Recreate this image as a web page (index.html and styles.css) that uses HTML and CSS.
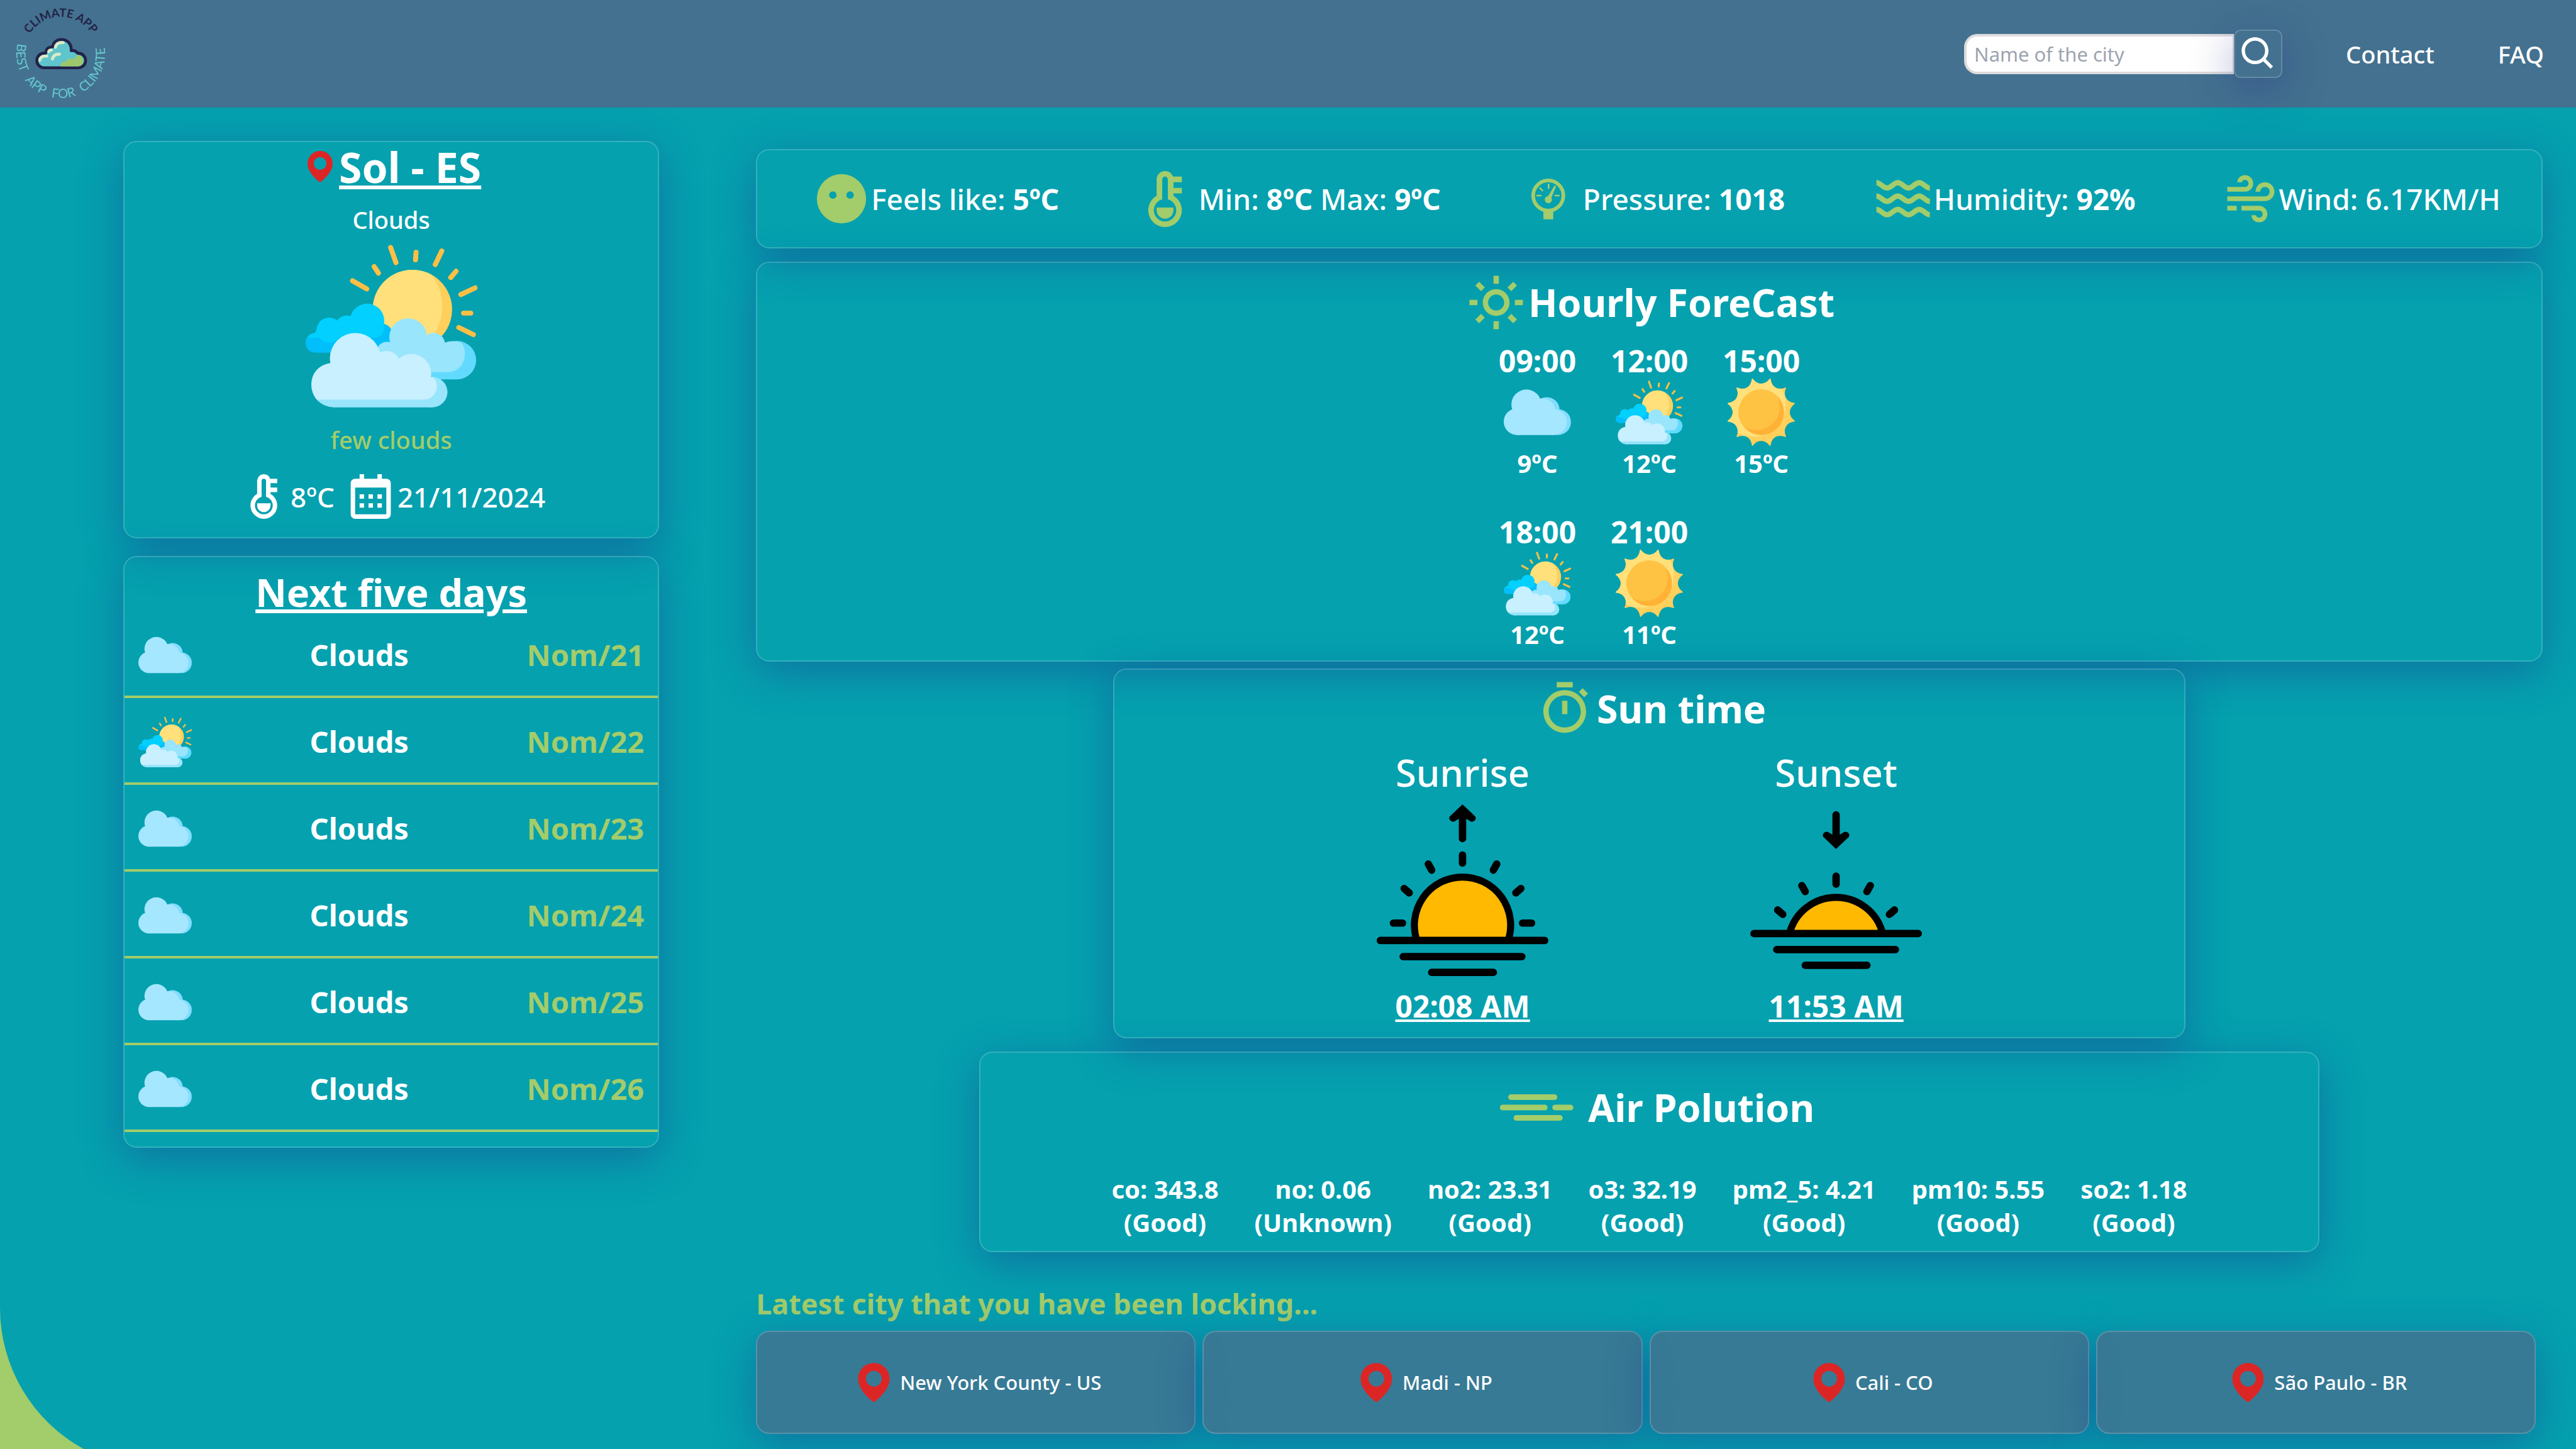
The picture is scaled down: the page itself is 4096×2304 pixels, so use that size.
FILE: index.html
```html
<!DOCTYPE html>
<html lang="en">
<head>
<meta charset="utf-8">
<title>Climate App</title>
<link rel="stylesheet" href="styles.css">
</head>
<body>
<svg class="sprite" aria-hidden="true">
  <symbol id="pin" viewBox="0 0 24 24">
    <path d="M12 2C7.589 2 4 5.589 4 9.995 3.971 16.44 11.696 21.784 12 22c0 0 8.029-5.56 8-12 0-4.411-3.589-8-8-8zm0 12c-2.21 0-4-1.79-4-4s1.79-4 4-4 4 1.79 4 4-1.79 4-4 4z"/>
  </symbol>
  <symbol id="thermometer" viewBox="0 0 24 24">
    <path fill-rule="evenodd" d="M12 2a3 3 0 0 0-3 3v5.800a6 6 0 1 0 6 0V10h3V8h-3V6h3V4h-3.170A3 3 0 0 0 12 2zM12 4a1 1 0 0 1 1 1v7.130a4 4 0 1 1-2 0V5a1 1 0 0 1 1-1z"/>
    <path d="M9 15v1a3 3 0 0 0 6 0v-1z"/>
  </symbol>
  <symbol id="cloud" viewBox="0 0 100 100">
    <g fill="#83dcff"><circle cx="64" cy="46.500" r="19"/><circle cx="80.700" cy="64.600" r="19.200"/></g>
    <g fill="#a4e7ff">
      <circle cx="19.800" cy="64" r="19.800"/><circle cx="33.700" cy="38.500" r="22.300"/>
      <circle cx="57.500" cy="49" r="19.500"/><circle cx="74.600" cy="64.600" r="19.200"/>
      <path d="M19.800 44h38v20h17v19.800h-55z"/>
    </g>
  </symbol>
  <symbol id="few-clouds" viewBox="0 0 100 100">
    <g stroke="#ffbf45" stroke-width="2.900" stroke-linecap="round">
      <path d="M49.500 4.600l3.100 8.800M64.300 7.400l-.3 4.300M79.300 6.600l-3.800 7.900M39.900 15.700l2.500 3.800M87.600 18.400l-3.100 3.700M27.300 24l8.300 4.700M98.700 28.100l-8.300 3.900M92 42.800h4.200M89.200 51.200l8.500 4.100"/>
    </g>
    <circle cx="62.200" cy="40.700" r="23.100" fill="#ffcf5c"/>
    <path d="M73.600 20.600A23.100 23.100 0 1 0 68 63a31 31 0 0 0 5.600-42.400z" fill="#ffe07a"/>
    <g fill="#01bffb"><path d="M5.500 54.400h39V49a6 6 0 0 1 6 6v10.800h-45a5.500 5.500 0 0 1-5.500-5.500v-.4a5.500 5.500 0 0 1 5.500-5.500z"/></g>
    <g fill="#02d0ff">
      <circle cx="13.700" cy="52.700" r="7.300"/><circle cx="24" cy="51" r="6.800"/><circle cx="35.800" cy="47.300" r="10"/>
      <path d="M.9 57.100a5.500 5.500 0 0 1 4.600-2.700L7 51h38.800c0 3.400-2.400 6.100-5.800 6.100z"/>
    </g>
    <g fill="#62dafd"><circle cx="88.100" cy="70.200" r="11.200"/><path d="M70 70h18v11.400H70z"/></g>
    <g fill="#98e5fc">
      <circle cx="59.700" cy="56.900" r="11"/><circle cx="74.500" cy="61" r="6.700"/><circle cx="47.500" cy="66" r="6.500"/>
      <path d="M47 60h34.200c2-1 4.600-1.300 9.500 0 4.500 6 1.500 17.200-7.800 17.200H47z"/>
    </g>
    <g fill="#98e5fc"><circle cx="73.700" cy="88.800" r="8.900"/><circle cx="16.200" cy="84.700" r="12.900"/><path d="M16.200 85h57.500v12.700H16.200z"/></g>
    <g fill="#c8f0ff">
      <circle cx="28.900" cy="69.200" r="14.800"/><circle cx="47" cy="73" r="8.200"/><circle cx="61.600" cy="78.100" r="11.500"/>
      <path d="M16.200 71.800H70v8.300h4.400c4.500 5 1.300 13.100-5.800 13.100H6.500C.7 86 2.500 72.500 16.200 71.800z"/>
    </g>
  </symbol>
  <clipPath id="lit-side"><circle cx="38" cy="38" r="48.500"/></clipPath>
  <clipPath id="disc"><circle cx="50" cy="50" r="33.800"/></clipPath>
  <symbol id="sun" viewBox="0 0 100 100">
    <path fill="#ffd05c" stroke="#ffd05c" stroke-width="1.400" stroke-linejoin="round" d="M36.800.7C44.500 10.800 55.500 10.800 63.200.7C64.800 13.300 74.400 18.800 86.100 13.900C81.200 25.600 86.700 35.200 99.300 36.800C89.200 44.500 89.200 55.500 99.300 63.200C86.700 64.800 81.200 74.400 86.100 86.100C74.400 81.200 64.800 86.700 63.200 99.300C55.500 89.200 44.500 89.200 36.800 99.300C35.200 86.700 25.600 81.200 13.900 86.100C18.800 74.400 13.300 64.800.7 63.200C10.800 55.500 10.800 44.500.7 36.800C13.300 35.200 18.800 25.600 13.900 13.900C25.600 18.800 35.200 13.300 36.800.7Z"/>
    <path clip-path="url(#lit-side)" fill="#ffe07a" stroke="#ffe07a" stroke-width="1.400" stroke-linejoin="round" d="M36.800.7C44.500 10.800 55.500 10.800 63.200.7C64.800 13.300 74.400 18.800 86.100 13.900C81.200 25.600 86.700 35.200 99.300 36.800C89.200 44.500 89.200 55.500 99.300 63.200C86.700 64.800 81.200 74.400 86.100 86.100C74.400 81.200 64.800 86.700 63.200 99.300C55.500 89.200 44.500 89.200 36.800 99.300C35.200 86.700 25.600 81.200 13.900 86.100C18.800 74.400 13.300 64.800.7 63.200C10.800 55.500 10.800 44.500.7 36.800C13.300 35.200 18.800 25.600 13.900 13.900C25.600 18.800 35.200 13.300 36.800.7Z"/>
    <circle cx="50" cy="50" r="33.800" fill="#ffb236"/>
    <circle cx="42.500" cy="41.500" r="35" fill="#ffc344" clip-path="url(#disc)"/>
  </symbol>
</svg>

<header class="topbar">
  <a class="logo" href="#" aria-label="Climate App">
    <svg viewBox="60 0 960 960">
      <defs>
        <path id="arc-top" d="M210 480A330 330 0 0 1 870 480"/>
        <path id="arc-bottom" d="M155.800 384.200A396 396 0 0 0 540 876A396 396 0 0 0 924.200 384.200"/>
      </defs>
      <text class="logo-top"><textPath href="#arc-top" startOffset="50%">CLIMATE APP</textPath></text>
      <text class="logo-bottom">
        <textPath href="#arc-bottom" startOffset="2">BEST</textPath>
        <textPath href="#arc-bottom" startOffset="348">APP</textPath>
        <textPath href="#arc-bottom" startOffset="632">FOR</textPath>
        <textPath href="#arc-bottom" startOffset="924">CLIMATE</textPath>
      </text>
      <path fill="#5fc5cd" stroke="#222349" stroke-width="52" d="M392 592a52 52 0 0 1 0-104h10q16 0 18-16c2-26 18-37 36-39q22 0 25-14c4-34 32-53 68-53c40 0 72 30 72 72v18q2 8 12 8h18q20 2 28 18q4 6 12 6h6a52 52 0 0 1 0 104z"/>
      <path fill="#5fc5cd" d="M392 592a52 52 0 0 1 0-104h10q16 0 18-16c2-26 18-37 36-39q22 0 25-14c4-34 32-53 68-53c40 0 72 30 72 72v18q2 8 12 8h18q20 2 28 18q4 6 12 6h6a52 52 0 0 1 0 104z"/>
      <path fill="#9cc76b" d="M538 592c0-30 20-46 50-42c8-24 30-34 56-24h22c4-24 18-35 31-35a51 51 0 0 1 0 101z"/>
      <path fill="none" stroke="#dcebc6" stroke-width="26" stroke-linecap="round" d="M493 422c6-28 28-46 70-42M432 462c4-10 14-17 26-15M353 539c4-26 24-42 64-38M466 527c6-26 26-46 64-43"/>
    </svg>
  </a>
  <nav class="nav">
    <form class="search">
      <input class="search-input" type="text" placeholder="Name of the city" aria-label="Name of the city">
      <button class="search-button glass" type="button" aria-label="Search">
        <svg viewBox="0 0 24 24"><path d="M10 18a7.952 7.952 0 0 0 4.897-1.688l4.396 4.396 1.414-1.414-4.396-4.396A7.952 7.952 0 0 0 18 10c0-4.411-3.589-8-8-8s-8 3.589-8 8 3.589 8 8 8zm0-14c3.309 0 6 2.691 6 6s-2.691 6-6 6-6-2.691-6-6 2.691-6 6-6z"/></svg>
      </button>
    </form>
    <a href="#">Contact</a>
    <a href="#">FAQ</a>
  </nav>
</header>

<main class="page">
  <aside class="sidebar">
    <section class="glass today">
      <h1 class="today-city"><svg class="pin"><use href="#pin"/></svg><span class="underlined">Sol - ES</span></h1>
      <p class="today-text">Clouds</p>
      <svg class="today-picture"><use href="#few-clouds"/></svg>
      <p class="today-text green">few clouds</p>
      <div class="today-facts">
        <svg><use href="#thermometer"/></svg><span>8ºC</span>
        <svg class="calendar" viewBox="0 0 24 24"><path d="M7 11h2v2H7zm0 4h2v2H7zm4-4h2v2h-2zm0 4h2v2h-2zm4-4h2v2h-2zm0 4h2v2h-2z"/><path d="M5 22h14c1.103 0 2-.897 2-2V6c0-1.103-.897-2-2-2h-2V2h-2v2H9V2H7v2H5c-1.103 0-2 .897-2 2v14c0 1.103.897 2 2 2zM19 8l.001 12H5V8h14z"/></svg><span>21/11/2024</span>
      </div>
    </section>

    <section class="glass week">
      <h2 class="underlined">Next five days</h2>
      <ul>
        <li><svg><use href="#cloud"/></svg><span>Clouds</span><span class="green">Nom/21</span></li>
        <li><svg><use href="#few-clouds"/></svg><span>Clouds</span><span class="green">Nom/22</span></li>
        <li><svg><use href="#cloud"/></svg><span>Clouds</span><span class="green">Nom/23</span></li>
        <li><svg><use href="#cloud"/></svg><span>Clouds</span><span class="green">Nom/24</span></li>
        <li><svg><use href="#cloud"/></svg><span>Clouds</span><span class="green">Nom/25</span></li>
        <li><svg><use href="#cloud"/></svg><span>Clouds</span><span class="green">Nom/26</span></li>
      </ul>
    </section>
  </aside>

  <div class="content">
    <section class="glass stats">
      <div class="stat">
        <svg class="icon-face" viewBox="0 0 24 24"><path fill-rule="evenodd" d="M12 2a10 10 0 1 0 0 20a10 10 0 0 0 0-20zM8.500 9a1.500 1.500 0 1 1 0 3a1.500 1.500 0 0 1 0-3zM15.500 9a1.500 1.500 0 1 1 0 3a1.500 1.500 0 0 1 0-3z"/></svg>
        <p>Feels like: <b>5ºC</b></p>
      </div>
      <div class="stat">
        <svg class="icon-thermometer"><use href="#thermometer"/></svg>
        <p>Min: <b>8ºC</b> Max: <b>9ºC</b></p>
      </div>
      <div class="stat">
        <svg class="icon-gauge" viewBox="90 30 480 480">
          <circle cx="258.500" cy="238.500" r="135.500" fill="none" stroke="#a3cc6a" stroke-width="33"/>
          <path d="M215 370h88v82h-88zM254 132h15v46h-15zM151 232h46v14h-46zM315 232h45v14h-45zM186 162l30 32-9 10-32-32zM315 149l14 7-41 98v20h-32v-30z"/>
          <circle cx="259" cy="275" r="32"/>
        </svg>
        <p>Pressure: <b>1018</b></p>
      </div>
      <div class="stat">
        <svg class="icon-waves" viewBox="-20 0 192 112"><g fill="none" stroke="#a3cc6a" stroke-width="16"><path d="M0 8C12 8 20 24 32 24S52 8 64 8S84 24 96 24S116 8 128 8S148 24 160 24"/><path d="M0 48C12 48 20 64 32 64S52 48 64 48S84 64 96 64S116 48 128 48S148 64 160 64"/><path d="M0 88C12 88 20 104 32 104S52 88 64 88S84 104 96 104S116 88 128 88S148 104 160 104"/></g></svg>
        <p>Humidity: <b>92%</b></p>
      </div>
      <div class="stat">
        <svg class="icon-wind" viewBox="0 0 24 24"><path d="M13 5.500C13 3.570 11.430 2 9.500 2 7.466 2 6.250 3.525 6.250 5h2c0-.415.388-1 1.250-1 .827 0 1.500.673 1.500 1.500S10.327 7 9.500 7H2v2h7.500C11.430 9 13 7.430 13 5.500zm2.500 9.500H8v2h7.500c.827 0 1.500.673 1.500 1.500s-.673 1.500-1.500 1.500c-.862 0-1.250-.585-1.250-1h-2c0 1.475 1.216 3 3.250 3 1.930 0 3.500-1.570 3.500-3.500S17.430 15 15.500 15z"/><path d="M18 5c-2.206 0-4 1.794-4 4h2c0-1.103.897-2 2-2s2 .897 2 2-.897 2-2 2H2v2h16c2.206 0 4-1.794 4-4s-1.794-4-4-4zM2 15h4v2H2z"/></svg>
        <p>Wind: 6.17KM/H</p>
      </div>
    </section>

    <section class="glass hourly">
      <h2 class="title">
        <svg class="title-icon" viewBox="0 0 24 24"><path d="M6.993 12c0 2.761 2.246 5.007 5.007 5.007s5.007-2.246 5.007-5.007S14.761 6.993 12 6.993 6.993 9.239 6.993 12zM12 8.993c1.658 0 3.007 1.349 3.007 3.007S13.658 15.007 12 15.007 8.993 13.658 8.993 12 10.342 8.993 12 8.993zM10.998 19h2v3h-2zm0-17h2v3h-2zm-9 9h3v2h-3zm17 0h3v2h-3zM4.219 18.363l2.120-2.122 1.415 1.414-2.120 2.122zM16.240 6.344l2.122-2.122 1.414 1.414-2.122 2.122zM6.342 7.759 4.220 5.637l1.415-1.414 2.120 2.122zm13.434 10.605-1.414 1.414-2.122-2.122 1.414-1.414z"/></svg>
        Hourly ForeCast
      </h2>
      <ul class="hours">
        <li><b>09:00</b><svg><use href="#cloud"/></svg><span>9ºC</span></li>
        <li><b>12:00</b><svg><use href="#few-clouds"/></svg><span>12ºC</span></li>
        <li><b>15:00</b><svg><use href="#sun"/></svg><span>15ºC</span></li>
        <li><b>18:00</b><svg><use href="#few-clouds"/></svg><span>12ºC</span></li>
        <li><b>21:00</b><svg><use href="#sun"/></svg><span>11ºC</span></li>
      </ul>
    </section>

    <section class="glass suntime">
      <h2 class="title">
        <svg class="title-icon" viewBox="0 0 24 24"><path d="M12 5c-4.411 0-8 3.589-8 8s3.589 8 8 8 8-3.589 8-8-3.589-8-8-8zm0 14c-3.309 0-6-2.691-6-6s2.691-6 6-6 6 2.691 6 6-2.691 6-6 6z"/><path d="M11 9h2v5h-2zM9 2h6v2H9zm10.293 5.707-2-2 1.414-1.414 2 2z"/></svg>
        Sun time
      </h2>
      <div class="sun-events">
        <div class="sun-event">
          <h3>Sunrise</h3>
          <svg viewBox="0 0 512 512">
            <path fill="#ffb900" stroke="#000" stroke-width="21" d="M120 406A143.500 143.500 0 1 1 392 406"/>
            <g fill="none" stroke="#000" stroke-width="22" stroke-linecap="round">
              <path d="M11 406h490M79 454h354M164 501h184M256 151v24M154 178l10 18M358 178l-10 18M82 251l15 13M430 251l-15 13M50 354h27M435 354h27M256 20v82"/>
            </g>
            <path d="M256 0l38 36c6 8-6 20-15 14l-23-14-23 14c-9 6-21-6-15-14z"/>
          </svg>
          <b class="underlined">02:08 AM</b>
        </div>
        <div class="sun-event">
          <h3>Sunset</h3>
          <svg viewBox="0 0 512 512">
            <path fill="#ffb900" stroke="#000" stroke-width="21" d="M117 385A143.500 143.500 0 0 1 395 385"/>
            <g fill="none" stroke="#000" stroke-width="22" stroke-linecap="round">
              <path d="M11 385h490M79 433h354M164 480h184M256 214v24M154 242l10 18M358 242l-10 18M82 315l15 13M430 315l-15 13M256 31v82"/>
            </g>
            <path d="M256 133l38-36c6-8-6-20-15-14l-23 14-23-14c-9-6-21 6-15 14z"/>
          </svg>
          <b class="underlined">11:53 AM</b>
        </div>
      </div>
    </section>

    <section class="glass air">
      <h2 class="title">
        <svg class="haze-icon" viewBox="-46 -57 310 192"><path fill="none" stroke="#a3cc6a" stroke-width="17" stroke-linecap="round" d="M34 8h130M9 39h126M166 39h46M50 70h130"/></svg>
        Air Polution
      </h2>
      <ul class="pollutants">
        <li>co: 343.8<br>(Good)</li>
        <li>no: 0.06<br>(Unknown)</li>
        <li>no2: 23.31<br>(Good)</li>
        <li>o3: 32.19<br>(Good)</li>
        <li>pm2_5: 4.21<br>(Good)</li>
        <li>pm10: 5.55<br>(Good)</li>
        <li>so2: 1.18<br>(Good)</li>
      </ul>
    </section>

    <section class="latest">
      <h2 class="green">Latest city that you have been locking...</h2>
      <div class="cities">
        <a class="glass city" href="#"><svg><use href="#pin"/></svg>New York County - US</a>
        <a class="glass city" href="#"><svg><use href="#pin"/></svg>Madi - NP</a>
        <a class="glass city" href="#"><svg><use href="#pin"/></svg>Cali - CO</a>
        <a class="glass city" href="#"><svg><use href="#pin"/></svg>São Paulo - BR</a>
      </div>
    </section>
  </div>
</main>
<svg class="corner" viewBox="0 0 133 225" aria-hidden="true"><path d="M0 0A256 256 0 0 0 133 225H0z"/></svg>
</body>
</html>
```
FILE: styles.css
```css
:root {
  --green: #a3cc6a;
  --teal: #05a1af;
  --steel: #44718f;
}

* {
  box-sizing: border-box;
  margin: 0;
  padding: 0;
}

body {
  position: relative;
  min-height: 100vh;
  overflow: hidden;
  background: var(--teal);
  color: #fff;
  font-family: "Noto Sans", "Open Sans", sans-serif;
  font-size: 38px;
  font-weight: 500;
}

ul {
  list-style: none;
}

a {
  color: inherit;
  text-decoration: none;
}

svg {
  display: block;
  flex: none;
  fill: currentColor;
}

.sprite {
  position: absolute;
  width: 0;
  height: 0;
}

.green {
  color: var(--green);
}

.underlined {
  text-decoration: underline;
}

.glass {
  border: 2px solid rgba(255, 255, 255, 0.18);
  border-radius: 21px;
  box-shadow: 0 17px 68px 0 rgba(31, 38, 135, 0.37);
}

/* Top bar */
.topbar {
  display: flex;
  align-items: center;
  justify-content: space-between;
  height: 171px;
  padding: 0 51px 0 11px;
  background: var(--steel);
}

.logo svg {
  width: 171px;
  height: 171px;
}

.logo-top,
.logo-bottom {
  font-family: Lato, sans-serif;
}

.logo-top {
  fill: #222349;
  font-size: 104px;
  font-weight: 700;
  text-anchor: middle;
}

.logo-bottom {
  fill: #65c8d0;
  font-size: 114px;
  font-weight: 400;
}

.nav {
  display: flex;
  align-items: center;
  gap: 101px;
}

.search {
  display: flex;
  align-items: center;
}

.search-input {
  width: 429px;
  height: 64px;
  padding: 0 12px;
  border: 4px solid #dcdcdc;
  border-right-width: 2px;
  border-radius: 21px 0 0 21px;
  background: #fff;
  color: #374151;
  font: 400 31px "Noto Sans", sans-serif;
}

.search-input::placeholder {
  color: #9ca3af;
}

.search-button {
  position: relative;
  display: grid;
  place-items: center;
  width: 77px;
  height: 77px;
  border-radius: 11px;
  background: var(--steel);
  color: #fff;
}

.search-button svg {
  width: 64px;
  height: 64px;
}

/* Page columns */
.page {
  display: grid;
  grid-template-columns: 3fr 10fr;
  align-items: start;
  gap: 154px;
  padding: 53px 53px 20px 196px;
}

.sidebar {
  display: grid;
  gap: 28px;
}

.content {
  display: flex;
  flex-direction: column;
  align-items: center;
  padding-top: 13px;
}

/* Current weather */
.today {
  display: flex;
  flex-direction: column;
  align-items: center;
  padding-bottom: 22px;
}

.today-city {
  display: flex;
  align-items: center;
  font-size: 66px;
  line-height: 78px;
}

.pin {
  width: 60px;
  height: 60px;
  color: #dc2626;
}

.today-text {
  margin-top: 15px;
  line-height: 60px;
}

.today-picture {
  width: 273px;
  height: 273px;
  margin-top: 2px;
}

.today-facts {
  display: flex;
  align-items: center;
  margin-top: 18px;
  font-size: 44px;
}

.today-facts svg {
  width: 85px;
  height: 85px;
}

.today-facts .calendar {
  margin-left: 15px;
}

/* Next days */
.week {
  padding: 25px 0 23px;
  text-align: center;
}

.week h2 {
  font-size: 61px;
  line-height: 61px;
}

.week li {
  display: flex;
  align-items: center;
  justify-content: space-between;
  height: 138px;
  padding: 4px 22px 0;
  border-bottom: 4px solid var(--green);
  font-size: 47px;
  font-weight: 700;
}

.week li svg {
  width: 85px;
  height: 85px;
}

/* Figures row */
.stats {
  display: grid;
  grid-template-columns: 952fr 1188fr 1015fr 1052fr 827fr;
  align-items: center;
  width: 100%;
  height: 158px;
  padding: 0 65px 0 87px;
  font-size: 46px;
}

.stat {
  display: flex;
  align-items: center;
  white-space: nowrap;
}

.stat svg {
  color: var(--green);
}

.icon-face {
  width: 94px;
  height: 94px;
}

.icon-thermometer {
  width: 107px;
  height: 107px;
}

.icon-gauge {
  width: 85px;
  height: 85px;
}

.icon-waves {
  width: 102px;
  height: 60px;
}

.icon-wind {
  width: 90px;
  height: 90px;
}

/* Section titles */
.title {
  display: flex;
  align-items: center;
  justify-content: center;
  font-size: 61px;
  line-height: 80px;
}

.title-icon {
  width: 102px;
  height: 102px;
  color: var(--green);
}

.haze-icon {
  width: 165px;
  height: 102px;
}

/* Hourly forecast */
.hourly {
  width: 100%;
  margin-top: 21px;
  padding: 12px 0 14px;
}

.hours {
  display: grid;
  grid-template-columns: repeat(3, 122px);
  justify-content: center;
  gap: 54px 56px;
  margin-top: 14px;
}

.hours li {
  display: flex;
  flex-direction: column;
  align-items: center;
}

.hours b {
  font-size: 48px;
  line-height: 56px;
}

.hours svg {
  width: 107px;
  height: 107px;
}

.hours span {
  font-size: 40px;
  font-weight: 700;
  line-height: 55px;
}

/* Sun time */
.suntime {
  width: 60%;
  margin-top: 11px;
  padding: 11px 0 17px;
}

.sun-events {
  display: flex;
  justify-content: center;
  gap: 321px;
  margin-top: 10px;
}

.sun-event {
  display: flex;
  flex-direction: column;
  align-items: center;
}

.sun-event h3 {
  font-size: 60px;
  font-weight: 500;
  line-height: 80px;
}

.sun-event svg {
  width: 273px;
  height: 273px;
  margin: 11px 0 16px;
  fill: #000;
}

.sun-event b {
  font-size: 48px;
  line-height: 64px;
}

/* Air quality */
.air {
  width: 75%;
  margin-top: 21px;
  padding: 36px 0 19px;
}

.pollutants {
  display: flex;
  justify-content: center;
  gap: 57px;
  margin-top: 52px;
  font-size: 40px;
  font-weight: 700;
  line-height: 53px;
  text-align: center;
}

/* Recent searches */
.latest {
  width: 100%;
  margin-top: 50px;
}

.latest h2 {
  font-size: 45px;
  line-height: 64px;
}

.cities {
  display: grid;
  grid-template-columns: repeat(4, 1fr);
  gap: 11px;
  margin: 11px 11px 0 0;
}

.city {
  display: flex;
  align-items: center;
  justify-content: center;
  gap: 4px;
  height: 164px;
  background: rgba(68, 113, 143, 0.8);
  font-size: 31px;
}

.city svg {
  width: 75px;
  height: 75px;
  color: #dc2626;
}

.corner {
  position: absolute;
  bottom: 0;
  left: 0;
  width: 133px;
  height: 225px;
  color: var(--green);
}
```
